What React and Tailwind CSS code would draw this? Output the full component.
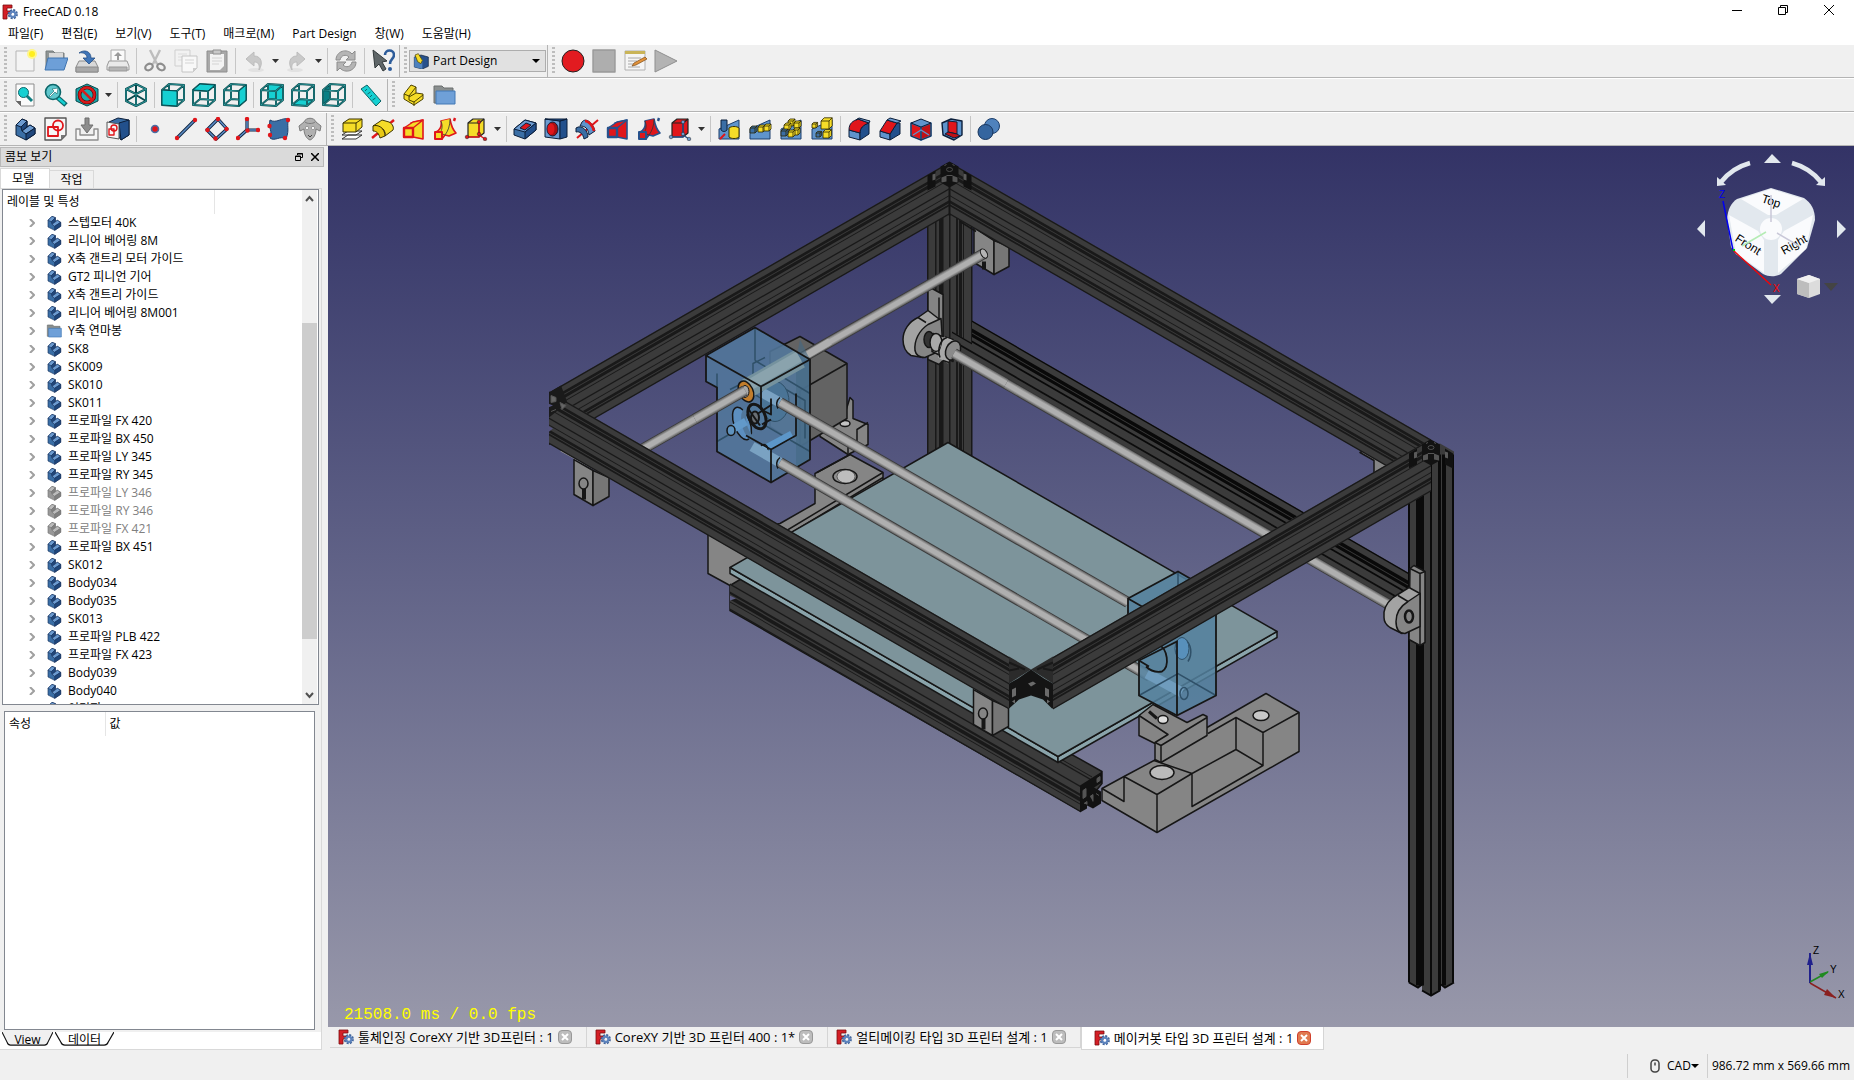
import { useState } from 'react';

const MENUS = ['파일(F)', '편집(E)', '보기(V)', '도구(T)', '매크로(M)', 'Part Design', '창(W)', '도움말(H)'];

const TREE = [
  { name: '스텝모터 40K' },
  { name: '리니어 베어링 8M' },
  { name: 'X축 갠트리 모터 가이드' },
  { name: 'GT2 피니언 기어' },
  { name: 'X축 갠트리 가이드' },
  { name: '리니어 베어링 8M001' },
  { name: 'Y축 연마봉', kind: 'folder' },
  { name: 'SK8' },
  { name: 'SK009' },
  { name: 'SK010' },
  { name: 'SK011' },
  { name: '프로파일 FX 420' },
  { name: '프로파일 BX 450' },
  { name: '프로파일 LY 345' },
  { name: '프로파일 RY 345' },
  { name: '프로파일 LY 346', hidden: true },
  { name: '프로파일 RY 346', hidden: true },
  { name: '프로파일 FX 421', hidden: true },
  { name: '프로파일 BX 451' },
  { name: 'SK012' },
  { name: 'Body034' },
  { name: 'Body035' },
  { name: 'SK013' },
  { name: '프로파일 PLB 422' },
  { name: '프로파일 FX 423' },
  { name: 'Body039' },
  { name: 'Body040' },
  { name: '이미지' },
];

const DOCS = [
  '툴체인징 CoreXY 기반 3D프린터 : 1',
  'CoreXY 기반 3D 프린터 400 : 1*',
  '얼티메이킹 타입 3D 프린터 설계 : 1',
  '메이커봇 타입 3D 프린터 설계 : 1',
];

// ---------- icons, all on a 24 grid ----------

const BLUE = '#3a6ea5';
const NAVY = '#0b1e3a';
const TEAL = '#16d0d2';
const TEAL_DARK = '#06484c';
const YEL = '#f5dc28';
const RED = '#e0161b';

function Svg({ children, className = 'w-6 h-6' }) {
  return (
    <svg viewBox="0 0 24 24" className={className} aria-hidden="true" strokeLinejoin="round">
      {children}
    </svg>
  );
}

function Logo({ className = 'w-4 h-4' }) {
  return (
    <svg viewBox="0 0 16 16" className={className} aria-hidden="true">
      <path d="M1 1h9v3H5v3h4v3H5v5H1z" fill="#d41f26" stroke="#7a0c10" strokeWidth=".8" />
      <circle cx="10.8" cy="10.2" r="3.9" fill="none" stroke="#3f6299" strokeWidth="2.4" strokeDasharray="1.9 1.15" />
      <circle cx="10.8" cy="10.2" r="2.6" fill="none" stroke="#5c83bd" strokeWidth="2.2" />
    </svg>
  );
}

function BodyShape({ fill = BLUE, light = '#6c9bd0', dark = '#1f477c', line = NAVY }) {
  return (
    <g stroke={line} strokeWidth="1">
      <path d="M3 8l6-6 5 2v6l3-2 5 3v6l-9 6-10-5z" fill={fill} />
      <path d="M3 8l6-6 5 2-6 6z" fill={light} />
      <path d="M8 10l6-6v6l-5 4z" fill={dark} />
      <path d="M9 14l8-6 5 3-9 6z" fill={light} />
      <path d="M13 17l9-6v6l-9 6z" fill={dark} />
    </g>
  );
}

function FolderShape() {
  return (
    <g>
      <path d="M2 3h8l2 2h9v15H2z" fill="#8a8f8f" stroke="#6b6f6f" />
      <path d="M4 8h19v13H4z" fill="#6fa0d8" stroke="#4379b5" />
    </g>
  );
}

// cube drawn as a wire frame with one painted face
function ViewCube({ face }) {
  const faces = {
    front: '1,7 16,8 16,23 1,22',
    top: '1,7 8,1 23,2 16,8',
    right: '16,8 23,2 23,17 16,23',
    rear: '8,1 23,2 23,17 8,16',
    bottom: '1,22 8,16 23,17 16,23',
    left: '1,7 8,1 8,16 1,22',
  };
  const wire = 'M1 7l15 1v15L1 22zM8 1l15 1v15L8 16zM1 7l7-6M16 8l7-6M16 23l7-6M1 22l7-6';
  return (
    <Svg>
      <polygon points={faces[face]} fill={face === 'left' ? '#0b7f84' : TEAL} />
      <path d={wire} fill="none" stroke={TEAL_DARK} strokeWidth="2" />
      <path d={wire} fill="none" stroke="#3fb9bb" strokeWidth=".6" />
      {['front', 'top', 'right'].includes(face) && (
        <polygon points={faces[face]} fill={TEAL} stroke={TEAL_DARK} strokeWidth="1" />
      )}
    </Svg>
  );
}

function LoftShape({ fill, line }) {
  return (
    <g>
      <path d="M9 6l12-3v19l-10-2z" fill={fill} stroke={line} strokeWidth="1.6" />
      <path d="M2 11l9-6 10-2-10 8z" fill={fill} stroke={line} strokeWidth="1.4" />
      <path d="M2 11h9v9H2z" fill={fill} stroke={line} strokeWidth="2.4" />
    </g>
  );
}

function SweepShape({ fill, line }) {
  return (
    <g>
      <path d="M3 15c4-2 6-6 5-11l9-2c1 6 3 11 6 14l-7 3-4-1-3 4z" fill={fill} stroke={line} strokeWidth="1.6" />
      <path d="M8 4c2 5 1 9-1 12l5 2c3-4 5-9 5-16" fill={fill} stroke="#333" strokeWidth=".8" />
      <path d="M2 15h7v7H2z" fill={fill} stroke={line} strokeWidth="2" />
      <path d="M22 1l-1 3" stroke={line} strokeWidth="2.4" />
    </g>
  );
}

function PrimShape({ fill, line, dot }) {
  return (
    <g>
      <path d="M4 6l5-4h11v14l-5 4H4z" fill={fill} stroke="#222" strokeWidth="1.2" />
      <path d="M4 6h11l5-4M15 6v14" fill="none" stroke="#222" strokeWidth="1.2" />
      <path d="M15 6v14H4M15 18l6 4" stroke={line} fill="none" strokeWidth="1.4" />
      {[[15, 5], [3, 20], [15, 17], [21, 22]].map(([x, y]) => (
        <circle key={`${x}${y}`} cx={x} cy={y} r="1.8" fill={dot} stroke="#222" strokeWidth=".5" />
      ))}
    </g>
  );
}

function Hill() {
  return <path d="M2 12l20-9v19H2z" fill="#5f94cc" stroke="#1d3f6c" strokeWidth="1" />;
}
function MiniCube({ x, y, s = 5, fill = YEL }) {
  return (
    <g stroke="#2a2500" strokeWidth=".8">
      <path d={`M${x} ${y}l${s * 0.4} ${-s * 0.4}h${s}v${s}l${-s * 0.4} ${s * 0.4}h${-s}z`} fill={fill} />
      <path d={`M${x} ${y}h${s}v${s}M${x + s} ${y}l${s * 0.4} ${-s * 0.4}`} fill="none" />
    </g>
  );
}

const ICONS = {
  new: (
    <Svg>
      <path d="M3 2h18v20H3z" fill="#f4f4f4" stroke="#b5b5b5" />
      <circle cx="19" cy="5" r="5" fill="#fff68a" />
      <circle cx="19" cy="5" r="3" fill="#ffee1e" />
    </Svg>
  ),
  open: (
    <Svg>
      <path d="M2 2h7l2 2h9v15H2z" fill="#8f9494" stroke="#777c7c" />
      <path d="M5 4h14v6H5z" fill="#d8d8d8" />
      <path d="M4 9h20l-4 12H1z" fill="#6d9fd8" stroke="#3f74b0" />
    </Svg>
  ),
  save: (
    <Svg>
      <path d="M4 12h16l3 6v5H1v-5z" fill="#d9d9d9" stroke="#8b8b8b" />
      <path d="M1 18h22v5H1z" fill="#a9a9a9" stroke="#8b8b8b" />
      <path d="M4 4c5-4 12-2 12 5h4l-6 6-6-6h4c0-4-4-6-8-5z" fill="#3f75b8" stroke="#254f86" strokeWidth=".8" />
    </Svg>
  ),
  print: (
    <Svg>
      <path d="M5 1h14v13H5z" fill="#fafafa" stroke="#aaa" />
      <path d="M12 3l4 4h-3v4h-2V7H8z" fill="#9a9a9a" />
      <path d="M3 12h18l2 5v4H1v-4z" fill="#e9e9e9" stroke="#999" />
      <path d="M3 18h18v4H3z" fill="#b4b4b4" stroke="#999" />
    </Svg>
  ),
  cut: (
    <Svg>
      <path d="M7 1l7 14M17 1l-7 14" stroke="#bdbdbd" strokeWidth="2.4" />
      <ellipse cx="6" cy="18" rx="4" ry="3" fill="none" stroke="#8d8d8d" strokeWidth="2.2" transform="rotate(-30 6 18)" />
      <ellipse cx="18" cy="18" rx="4" ry="3" fill="none" stroke="#8d8d8d" strokeWidth="2.2" transform="rotate(30 18 18)" />
    </Svg>
  ),
  copy: (
    <Svg>
      <path d="M1 1h15v16H1z" fill="#f2f2f2" stroke="#cfcfcf" />
      <path d="M4 5h9M4 8h9M4 11h6" stroke="#dcdcdc" />
      <path d="M8 7h15v12l-4 4H8z" fill="#f8f8f8" stroke="#c4c4c4" />
      <path d="M11 11h9M11 14h9" stroke="#d4d4d4" />
      <path d="M23 19h-4v4z" fill="#cdcdcd" />
    </Svg>
  ),
  paste: (
    <Svg>
      <path d="M2 2h20v21H2z" fill="#a9a9a9" stroke="#8e8e8e" />
      <path d="M5 5h14v12l-4 4H5z" fill="#f3f3f3" />
      <path d="M8 1h8v4H8z" fill="#c9c9c9" stroke="#8e8e8e" />
      <path d="M7 9h10M7 12h10M7 15h7" stroke="#d3d3d3" />
    </Svg>
  ),
  undo: (
    <Svg>
      <ellipse cx="14" cy="21" rx="8" ry="2" fill="#e2e2e2" />
      <path d="M4 10l8-7v4c8 0 9 8 5 14 1-6-1-8-5-8v4z" fill="#c9c9c9" stroke="#bcbcbc" />
    </Svg>
  ),
  redo: (
    <Svg>
      <ellipse cx="10" cy="21" rx="8" ry="2" fill="#e2e2e2" />
      <path d="M20 10l-8-7v4c-8 0-9 8-5 14-1-6 1-8 5-8v4z" fill="#c9c9c9" stroke="#bcbcbc" />
    </Svg>
  ),
  refresh: (
    <Svg>
      <path d="M2 11c0-9 11-12 16-6l3-3v9h-9l3-3c-3-3-8-2-9 3z" fill="#b5b5b5" stroke="#8c8c8c" />
      <path d="M22 13c0 9-11 12-16 6l-3 3v-9h9l-3 3c3 3 8 2 9-3z" fill="#b5b5b5" stroke="#8c8c8c" />
    </Svg>
  ),
  whats: (
    <Svg>
      <path d="M2 1l14 11-5 1 4 7-3 2-4-7-4 4z" fill="#5f6668" stroke="#333a3c" />
      <path d="M14 6c0-6 9-6 9 0 0 4-4 4-4 9" fill="none" stroke="#2d5c9a" strokeWidth="2.6" />
      <circle cx="19" cy="20" r="2" fill="#2d5c9a" />
    </Svg>
  ),
  record: <Svg><circle cx="12" cy="12" r="11" fill="#e21b20" stroke="#222" strokeWidth="1" /></Svg>,
  stop: <Svg><rect x="1" y="1" width="22" height="22" fill="#aeaeae" stroke="#999" strokeWidth="1.4" /></Svg>,
  macro: (
    <Svg>
      <path d="M2 2h20v19H2z" fill="#f5f5f5" stroke="#b0b0b0" />
      <path d="M2 2h20v3H2z" fill="#c9b458" />
      <path d="M5 9h13M5 12h9M5 15h9M5 18h12" stroke="#a8a8a8" />
      <path d="M22 8l2 2-11 6-4 1 2-3z" fill="#e2923a" stroke="#7d4a16" strokeWidth=".7" />
    </Svg>
  ),
  play: <Svg><path d="M1 1l22 11L1 23z" fill="#b3b3b3" stroke="#8f8f8f" /></Svg>,
  fit: (
    <Svg>
      <path d="M3 1h18v22H8l-5-5z" fill="#fafafa" stroke="#8d8d8d" />
      <path d="M3 18h5v5z" fill="#666" />
      <path d="M14 13l5 5" stroke="#0c7d80" strokeWidth="3" />
      <circle cx="10.5" cy="9.5" r="5" fill={TEAL} stroke="#0c6669" />
    </Svg>
  ),
  zoomsel: (
    <Svg>
      <path d="M13 14l9 8" stroke="#0c6669" strokeWidth="5" />
      <path d="M14 15l7 6" stroke={TEAL} strokeWidth="2.6" />
      <circle cx="9" cy="9" r="7.5" fill="#5fc7cd" stroke="#0c6669" strokeWidth="1.6" />
      <path d="M5 13l5-5-2-2 6-1-1 6-2-2-5 5z" fill="#fff" stroke="#0c6669" strokeWidth=".6" />
    </Svg>
  ),
  drawstyle: (
    <Svg>
      <path d="M1 6l11-5 11 5v12l-11 5-11-5z" fill="#1aa8ab" stroke={TEAL_DARK} />
      <circle cx="12" cy="12" r="7.5" fill="none" stroke="#5a0000" strokeWidth="3.6" />
      <circle cx="12" cy="12" r="7.5" fill="none" stroke="#d81a1a" strokeWidth="2.4" />
      <path d="M6.8 6.800l10.400 10.400" stroke="#d81a1a" strokeWidth="2.600" />
    </Svg>
  ),
  iso: (
    <Svg>
      <path d="M12 1l10 5v12l-10 5-10-5V6zM2 6l10 5 10-5M12 11v12M12 1v11M2 18l10-6 10 6" fill="none" stroke={TEAL_DARK} strokeWidth="2" />
      <path d="M12 1l10 5v12l-10 5-10-5V6zM2 6l10 5 10-5M12 11v12" fill="none" stroke="#3fb9bb" strokeWidth=".7" />
    </Svg>
  ),
  front: <ViewCube face="front" />,
  top: <ViewCube face="top" />,
  right: <ViewCube face="right" />,
  rear: <ViewCube face="rear" />,
  bottom: <ViewCube face="bottom" />,
  left: <ViewCube face="left" />,
  measure: (
    <Svg>
      <path d="M2 6l6-4 14 16-5 5z" fill={TEAL} stroke="#0c6669" />
      <path d="M6 8l2-2M8.5 11l3-2M11 14l2-2M13.5 17l3-2" stroke="#0c6669" />
    </Svg>
  ),
  part: (
    <Svg>
      <g stroke="#4c4200" strokeWidth="1">
        <path d="M3 11l7-9 5 2v6l7 1v5l-9 6-10-6z" fill={YEL} />
        <path d="M3 11l5 2 7-9M8 13v4l5 2 9-7M13 19v4M8 14l7-4" fill="none" />
      </g>
    </Svg>
  ),
  group: <Svg><FolderShape /></Svg>,
  body: <Svg><BodyShape /></Svg>,
  sketch: (
    <Svg>
      <path d="M1 1h21v17l-5 5H1z" fill="#f6f6f6" stroke="#555" strokeWidth="1.4" />
      <path d="M22 18h-5v5z" fill="#777" />
      <path d="M4 10h10v9H4z" fill="none" stroke={RED} strokeWidth="1.8" />
      <circle cx="14" cy="8.5" r="5" fill="none" stroke={RED} strokeWidth="1.8" />
    </Svg>
  ),
  map: (
    <Svg>
      <path d="M1 12h4v6h14v-6h4v11H1z" fill="#f6f6f6" stroke="#8d8d8d" strokeWidth="1.4" />
      <path d="M10 1h4v7h4l-6 8-6-8h4z" fill="#8d8d8d" stroke="#6e6e6e" />
    </Svg>
  ),
  edit: (
    <Svg>
      <path d="M3 5l9-4 11 2v15l-8 5z" fill={BLUE} stroke={NAVY} />
      <path d="M13 6l10-3v15l-8 5z" fill="#22508c" stroke={NAVY} />
      <path d="M1 5l12 2v15L1 20z" fill="#f6f6f6" stroke="#555" />
      <path d="M3 12h5v6H3z" fill="none" stroke={RED} strokeWidth="1.4" />
      <circle cx="8" cy="11" r="3" fill="none" stroke={RED} strokeWidth="1.4" />
    </Svg>
  ),
  point: <Svg><circle cx="12" cy="12" r="3.5" fill={RED} stroke="#4a6ea5" strokeWidth="1.6" /></Svg>,
  line: (
    <Svg>
      <path d="M3 21L21 3" stroke={NAVY} strokeWidth="3.2" />
      <path d="M3 21L21 3" stroke="#5c8dc6" strokeWidth="1.6" />
      <circle cx="3" cy="21" r="2.2" fill={RED} />
      <circle cx="21" cy="3" r="2.2" fill={RED} />
    </Svg>
  ),
  plane: (
    <Svg>
      <path d="M13 2l9 10-11 10-9-9z" fill="none" stroke={NAVY} strokeWidth="3.2" />
      <path d="M13 2l9 10-11 10-9-9z" fill="none" stroke="#5c8dc6" strokeWidth="1.6" />
      {[[13, 2], [21.5, 12], [10.5, 21.5], [2.5, 13]].map(([x, y]) => <circle key={x} cx={x} cy={y} r="2.2" fill={RED} />)}
    </Svg>
  ),
  cs: (
    <Svg>
      <path d="M11 2v11h11M11 13l-9 8" fill="none" stroke={NAVY} strokeWidth="3.2" />
      <path d="M11 2v11h11M11 13l-9 8" fill="none" stroke="#5c8dc6" strokeWidth="1.6" />
      {[[11, 2], [22, 13], [11.5, 13.5], [2, 21]].map(([x, y]) => <circle key={x} cx={x} cy={y} r="2.2" fill={RED} />)}
    </Svg>
  ),
  binder: (
    <Svg>
      <path d="M3 3c6 4 12-3 19-1-3 6 1 10-3 20-6-4-11 3-16-1 3-7-2-10 0-18z" fill={BLUE} stroke="#1d3f6c" />
      {[[21, 3], [2.5, 9], [3, 18], [18, 21]].map(([x, y]) => <circle key={x} cx={x} cy={y} r="2.2" fill={RED} />)}
    </Svg>
  ),
  clone: (
    <Svg>
      <path d="M6 5c2-5 10-5 12 0l5 4-1 5-4-2c0 6-3 10-6 11-3-1-6-5-6-11l-4 2-1-5z" fill="#b0b0b0" stroke="#7c7c7c" />
      <path d="M7 5c2 2 8 2 10 0" stroke="#7c7c7c" fill="none" />
      <circle cx="9" cy="11" r="1.6" fill="#fff" stroke="#777" strokeWidth=".6" />
      <circle cx="15" cy="11" r="1.6" fill="#fff" stroke="#777" strokeWidth=".6" />
      <path d="M10 18l2 2 2-2" stroke="#444" fill="none" />
    </Svg>
  ),
  pad: (
    <Svg>
      <path d="M2 18l6-4h14l-6 4zM2 22l6-4h14l-6 4z" fill="#fff" stroke="#333" />
      <path d="M3 6l6-4h13v8l-6 5H3z" fill={YEL} stroke="#3b3300" />
      <path d="M3 6h13l6-4M16 6v9" fill="none" stroke="#3b3300" />
    </Svg>
  ),
  rev: (
    <Svg>
      <path d="M1 21L23 3" stroke={RED} strokeWidth="2.4" />
      <path d="M2 9l9-6 7 2c4 2 5 6 4 8l-8 6c1-4-2-9-6-8z" fill={YEL} stroke="#3b3300" />
      <path d="M2 9c5-2 12 2 12 10l-5 2c-1-4-3-7-7-7z" fill="#e8c814" stroke="#3b3300" />
    </Svg>
  ),
  loft: <Svg><LoftShape fill={YEL} line={RED} /></Svg>,
  sweep: <Svg><SweepShape fill={YEL} line={RED} /></Svg>,
  prim: <Svg><PrimShape fill={YEL} line={RED} dot={RED} /></Svg>,
  pocket: (
    <Svg>
      <path d="M1 12l11-9 11 3v7l-11 9-11-4z" fill={BLUE} stroke={NAVY} />
      <path d="M1 12l11-9 11 3-11 9z" fill="#6c9bd0" stroke={NAVY} />
      <path d="M12 15v7l11-9V6z" fill="#22508c" stroke={NAVY} />
      <path d="M7 11l6-5 5 2-6 5z" fill={RED} stroke={NAVY} />
    </Svg>
  ),
  hole: (
    <Svg>
      <path d="M1 2l15 2v18L1 20z" fill="#6c9bd0" stroke={NAVY} />
      <path d="M16 4l7-2v18l-7 2zM1 2h22l-7 2z" fill="#22508c" stroke={NAVY} />
      <ellipse cx="8.5" cy="12" rx="5.5" ry="7" fill="#a80f13" stroke={NAVY} />
      <ellipse cx="7" cy="12" rx="3.5" ry="5.5" fill={RED} />
    </Svg>
  ),
  groove: (
    <Svg>
      <path d="M2 21L23 3" stroke={RED} strokeWidth="2" />
      <path d="M7 5c4-5 11 1 13 9l-6 4C13 11 10 9 5 9z" fill="#5f94cc" stroke={NAVY} />
      <path d="M10 4c4 0 8 5 9 10" stroke={RED} strokeWidth="2.6" fill="none" />
      <path d="M1 11c6-4 12 3 12 9l-4 2c-1-5-4-8-8-7z" fill={BLUE} stroke={NAVY} />
    </Svg>
  ),
  subloft: <Svg><LoftShape fill={RED} line="#27518c" /></Svg>,
  subpipe: <Svg><SweepShape fill={RED} line="#27518c" /></Svg>,
  subprim: <Svg><PrimShape fill={RED} line="#27518c" dot="#6c9bd0" /></Svg>,
  mirror: (
    <Svg>
      <Hill />
      <path d="M4 3h6v10c-2 2-4 2-6 0z" fill={BLUE} stroke={NAVY} />
      <path d="M12 11c2-2 8-2 10 0v9c-2 2-8 2-10 0z" fill={YEL} stroke="#3b3300" />
      <path d="M3 22l5-5" stroke={RED} strokeWidth="2" />
    </Svg>
  ),
  linear: <Svg><Hill /><MiniCube x={2} y={11} fill={BLUE} /><MiniCube x={10} y={10} /><MiniCube x={16} y={9} /></Svg>,
  polar: (
    <Svg>
      <Hill />
      <MiniCube x={9} y={4} /><MiniCube x={15} y={6} /><MiniCube x={5} y={8} />
      <MiniCube x={14} y={13} /><MiniCube x={9} y={15} /><MiniCube x={2} y={14} fill={BLUE} />
    </Svg>
  ),
  multi: <Svg><Hill /><MiniCube x={11} y={4} s={8} /><MiniCube x={2} y={7} s={4} /><MiniCube x={13} y={15} s={6} /><MiniCube x={6} y={16} s={4} fill={BLUE} /></Svg>,
  fillet: (
    <Svg>
      <path d="M2 13l11 3v7L2 20z" fill="#5f94cc" stroke={NAVY} />
      <path d="M13 16c0-5 3-8 9-10v11l-9 6z" fill="#22508c" stroke={NAVY} />
      <path d="M2 13C2 6 6 4 11 2l11 4c-6 2-9 5-9 10z" fill={RED} stroke={NAVY} />
      <path d="M9 3l3-2 11 3-1 2-11-4z" fill="#6c9bd0" stroke={NAVY} />
    </Svg>
  ),
  chamfer: (
    <Svg>
      <path d="M2 14l10 3v6L2 20z" fill="#5f94cc" stroke={NAVY} />
      <path d="M12 17l7-11h3v11l-10 6z" fill="#22508c" stroke={NAVY} />
      <path d="M2 14L9 3l10 3-7 11z" fill={RED} stroke={NAVY} />
      <path d="M9 3l3-2 11 3-4 2z" fill="#6c9bd0" stroke={NAVY} />
    </Svg>
  ),
  draft: (
    <Svg>
      <path d="M2 6l10 4v13L2 19z" fill={RED} stroke="#3a6ea5" strokeWidth="1.6" />
      <path d="M22 6l-10 4v13l10-4z" fill="#c01015" stroke="#3a6ea5" strokeWidth="1.6" />
      <path d="M2 6l10-4 10 4-10 4z" fill="#5f94cc" stroke={NAVY} />
      <path d="M2 6v13l10 4 10-4V6M12 10v13" fill="none" stroke={NAVY} strokeWidth=".8" />
      <path d="M4 18l8-5 8 5" stroke="#5f94cc" strokeWidth="1.4" fill="none" />
    </Svg>
  ),
  thick: (
    <Svg>
      <path d="M2 6l9-4 11 2v14l-8 5-11-5z" fill="#5f94cc" stroke={NAVY} strokeWidth="1.4" />
      <path d="M8 4l9 1v12l-9-2z" fill={RED} stroke={NAVY} />
      <path d="M8 15l9 2 3 2-6 2-9-4z" fill="#c01015" stroke={NAVY} />
    </Svg>
  ),
  boolean: (
    <Svg>
      <circle cx="15" cy="9" r="7.5" fill="#4f82bd" stroke="#1d3f6c" />
      <circle cx="8.5" cy="15" r="7.5" fill="#34659f" stroke="#16345c" />
    </Svg>
  ),
  workbench: (
    <Svg className="w-4 h-4">
      <path d="M2 6l10-3 11 3v14l-9 4-12-3z" fill="#27518c" stroke={NAVY} />
      <path d="M2 6l12 3v15L2 21z" fill="#4f82bd" />
      <path d="M3 3l5-2 6 10-2 5-5-3z" fill={YEL} stroke="#3b3300" />
    </Svg>
  ),
};

// '|' is a divider, 'v' a drop-down arrow
const ROW1 = [
  ['new:새로 만들기', 'open:열기', 'save:저장', 'print:인쇄', '|', 'cut:잘라내기', 'copy:복사', 'paste:붙여넣기', '|', 'undo:실행 취소', 'v', 'redo:다시 실행', 'v', '|', 'refresh:새로 고침', '|', 'whats:도움말'],
  ['record:매크로 기록', 'stop:기록 중지', 'macro:매크로', 'play:매크로 실행'],
];
const ROW2 = [
  ['fit:전체 보기', 'zoomsel:선택 보기', 'drawstyle:그리기 스타일', 'v', '|', 'iso:등각', '|', 'front:정면', 'top:윗면', 'right:우측', '|', 'rear:뒷면', 'bottom:아랫면', 'left:좌측', '|', 'measure:거리 측정'],
  ['part:파트', 'group:그룹'],
];
const ROW3 = [
  ['body:바디', 'sketch:스케치', 'map:스케치 매핑', 'edit:스케치 편집', '|', 'point:점', 'line:선', 'plane:평면', 'cs:좌표계', 'binder:바인더', 'clone:복제'],
  ['pad:패드', 'rev:회전', 'loft:로프트', 'sweep:스윕', 'prim:프리미티브', 'v', '|', 'pocket:포켓', 'hole:구멍', 'groove:홈', 'subloft:로프트 빼기', 'subpipe:스윕 빼기', 'subprim:프리미티브 빼기', 'v', '|', 'mirror:대칭', 'linear:선형 패턴', 'polar:원형 패턴', 'multi:다중 변환', '|', 'fillet:모깎기', 'chamfer:모따기', 'draft:구배', 'thick:두께', '|', 'boolean:불리언'],
];

function Grip() {
  return <div className="w-[3px] h-7 ml-1 mr-0.5 bg-[repeating-linear-gradient(180deg,#bdbdbd_0_2px,transparent_2px_4px)]" />;
}

function Tools({ items, last }) {
  return (
    <div className={`flex items-center h-full pr-px ${last ? '' : 'border-r border-[#b4b4b4]'}`}>
      <Grip />
      {items.map((it, i) => {
        if (it === '|') return <div key={i} className="w-1.5 flex justify-center"><div className="w-px h-[26px] bg-[#c6c6c6]" /></div>;
        if (it === 'v') return (
          <button key={i} aria-label="더 보기" className="w-3 flex justify-center">
            <svg viewBox="0 0 7 4" className="w-[7px] h-1"><path d="M0 0h7L3.5 4z" fill="#333" /></svg>
          </button>
        );
        const [id, label] = it.split(':');
        return (
          <button key={i} aria-label={label} className="w-[31px] h-[30px] flex items-center justify-center">
            {ICONS[id]}
          </button>
        );
      })}
    </div>
  );
}

function ToolRow({ children }) {
  return <div className="h-[34px] flex items-center bg-[#f0f0f0] border-t border-t-white border-b border-b-[#b4b4b4]">{children}</div>;
}

// ---------- 3D scene ----------

// aluminium profile seen from the side: a slanted strip with grooves running along it
const GROOVES = [[0, 1.5], [7, 3], [11, 3.5], [17, 1], [26, 1.5], [33, 1], [38, 3], [42, 2], [51, 1.5]];

function Beam({ x1, y1, x2, y2, h = 52, bands = GROOVES, fill = '#3b3b3b', dark = '#191919' }) {
  const strip = (o, w) => `${x1},${y1 + o} ${x2},${y2 + o} ${x2},${y2 + o + w} ${x1},${y1 + o + w}`;
  return (
    <g>
      <polygon points={strip(0, h)} fill={fill} />
      {bands.map(([o, w]) => <polygon key={o} points={strip(o, w)} fill={dark} />)}
    </g>
  );
}

function Rod({ x1, y1, x2, y2, w = 10 }) {
  const p = { x1, y1, x2, y2 };
  return (
    <g>
      <line {...p} stroke="#3c3c3c" strokeWidth={w + 1} />
      <line {...p} stroke="#757575" strokeWidth={w - 1} />
      <line {...p} stroke="#959595" strokeWidth={w - 3} />
      <line {...p} stroke="#afafaf" strokeWidth={w - 5} />
    </g>
  );
}

function Cap({ x, y }) {
  return (
    <g transform={`translate(${x} ${y})`}>
      <path d="M-22 14l8-5v16l-8 4zM22 14l-8-5v16l8 4z" fill="#111" />
      <path d="M-17 13l3-1v6l-3 1zM17 13l-3-1v6l3 1z" fill="#5a5a5a" />
      <path d="M0 0l9 5v16l-9 5-9-5V5z" fill="#121212" />
      <path d="M-8 16l5-2v6l-5 1zM8 16l-5-2v6l5 1z" fill="#555" />
      <ellipse cx="0" cy="8" rx="3" ry="2" fill="none" stroke="#4c4c4c" />
      <path d="M-5 4l2-1M5 4l-2-1M-3 14h6" stroke="#555" />
    </g>
  );
}

// shaft support hanging under a profile
function Support({ x, y }) {
  return (
    <g transform={`translate(${x} ${y})`} stroke="#161616" strokeWidth="1.5" strokeLinejoin="round">
      <path d="M0 0v35l19 11V11z" fill="#858585" />
      <path d="M19 11v35l16-9V18z" fill="#767676" />
      <path d="M-13-9L35 17" stroke="#999" strokeWidth="2" />
      <path d="M10 29v11" strokeWidth="4" />
      <ellipse cx="9.5" cy="24" rx="4.5" ry="5.5" fill="#858585" />
    </g>
  );
}

function Scene() {
  const ink = '#161616';
  return (
    <svg viewBox="328 146 1526 882" preserveAspectRatio="xMidYMid slice" className="absolute inset-0 w-full h-full" aria-hidden="true">
      {/* back post */}
      <rect x="927.5" y="200" width="44.5" height="260" fill="#3b3b3b" />
      {[[927, 1.5], [935, 1.5], [939, 4.5], [949, 1.5], [956, 2], [959, 3], [963, 1], [971, 1.5]].map(([x, w]) => (
        <rect key={x} x={x} y="200" width={w} height="260" fill="#191919" />
      ))}

      {/* rear rail and its rod */}
      <Beam x1={952} y1={332} x2={1408} y2={595} h={24} bands={[[0, 1.5], [8, 2], [15, 2], [22, 2]]} dark="#0d0d0d" />
      <Beam x1={972} y1={321} x2={1408} y2={573} h={26} bands={[[0, 1.5], [8, 4], [13, 3.5], [20, 2]]} dark="#090909" />
      <Rod x1={950} y1={352} x2={1394} y2={608} />

      {/* left Z bracket */}
      <g stroke={ink} strokeWidth="1.5" strokeLinejoin="round">
        <path d="M928 291l4-2 11 6v66l-4 4-11-5z" fill="#858585" />
        <path d="M939 298v28" />
        <path d="M928 311l-10 7c-9 4-15 13-15 22 0 8 3 13 8 16l12 2 12-20 6-17z" fill="#a3a3a3" />
        <path d="M941 319l-13 6c-9 6-14 16-13 26 1 5 5 7 10 7l18-8z" fill="#858585" />
        <path d="M918 318l8 5" />
        <ellipse cx="929" cy="340" rx="5" ry="8" fill="#333" />
        <path d="M933 334l20 6v22l-21-10z" fill="#9d9d9d" />
        <ellipse cx="936" cy="343" rx="6" ry="9" fill="#a9a9a9" />
        <path d="M944 337l12 5-8 22-10-6z" fill="#a9a9a9" stroke="none" />
        <path d="M947 338c-7 2-10 12-7 20M943 361l6 2" fill="none" />
        <ellipse cx="953" cy="351" rx="7" ry="10" fill="#8a8a8a" transform="rotate(25 953 351)" />
      </g>
      <Rod x1={954} y1={354} x2={1006} y2={384} />

      {/* rear top supports */}
      <g stroke={ink} strokeWidth="1.5" strokeLinejoin="round">
        <path d="M974 228v35l20 12v-34z" fill="#858585" />
        <path d="M994 241v34l15-8v-20z" fill="#767676" />
        <path d="M960 222l16 10M1360 453l14 8v14l18-10-24-16z" fill="#858585" />
        <path d="M984 262v8" strokeWidth="4" />
      </g>

      {/* left carriage foot and bed support */}
      <g stroke={ink} strokeWidth="1.5" strokeLinejoin="round">
        <path d="M850 455l33 18v12L745 570v20l-15-4-22-12v-44l72-6 35-20v-30z" fill="#858585" />
        <path d="M883 473L770 541M883 478L772 545M817 473l33-18" fill="none" />
        <ellipse cx="845" cy="477" rx="12" ry="7" fill="#909090" />
        <ellipse cx="846" cy="477" rx="9" ry="6.5" fill="#bdbdbd" strokeWidth=".5" />
        <path d="M850 398l3 3v18l15 6v20l-20 10-28-18v-16l26-10z" fill="#858585" />
        <path d="M868 423l-11 7v18M848 454v-16l-18-11" fill="none" />
        <ellipse cx="845" cy="424" rx="5" ry="3" fill="#c4c4c4" />
      </g>

      {/* lower profile */}
      <path d="M730 586l20-12 352 198v12l-22 27-350-200z" fill="#3b3b3b" stroke={ink} strokeWidth="1.5" />
      <Beam x1={730} y1={584} x2={1080} y2={786} h={26} bands={[[0, 1.5], [8, 2.5], [12, 4], [18, 1], [25, 1.5]]} />
      <Beam x1={745} y1={577} x2={1092} y2={777} h={5} bands={[[0, 1], [3, 1.5]]} />
      <path d="M730 596l6 3-6 2z" fill="#5d5d84" />
      <path d="M1080 786l22-14v11l-8 5 7 4v12l-8 5-6-3v3l-7 4z" fill="#121212" />
      <path d="M1083 791l3-2v8l-3 2zM1097 779l3-2v4l-3 2zM1090 797l3-2v7M1096 794l3 2M1084 804l3-2v3" fill="#555" stroke="#555" />

      {/* print bed */}
      <g stroke={ink} strokeWidth="1.5" strokeLinejoin="round">
        <path d="M730 568v6l328 189v-6z" fill="#8aa4ab" />
        <path d="M1058 757v6l219-125v-6z" fill="#8aa4ab" />
        <path d="M948 443l329 189-219 125-328-189z" fill="#7d949b" />
      </g>

      {/* right Z block */}
      <g stroke={ink} strokeWidth="1.5" strokeLinejoin="round">
        <path d="M1102 789l22-12 30-16 53-33 59-34 33 19v39l-142 81-55-32z" fill="#858585" />
        <path d="M1124 777l33 18v38M1157 795l35-21M1192 774v33l71-41v-33l36-20M1263 733l-27-15v32l27 16M1236 750l-44 24M1236 718l-28 16M1124 777v25l-22-13M1154 761l38 13" fill="none" />
        <ellipse cx="1162" cy="773" rx="12" ry="7" fill="#bababa" />
        <ellipse cx="1261" cy="716" rx="8" ry="5" fill="#c8c8c8" />
        <path d="M1139 716v20l16 8v16l6 3 46-27v-19l-4-2-16 8-34-18z" fill="#858585" />
        <path d="M1139 716l29 19-13 8 6 3v17M1161 746l46-28" fill="none" />
        <ellipse cx="1163" cy="720" rx="5" ry="4" fill="#ddd" />
        <path d="M1149 712l8 7" strokeWidth="3" />
      </g>

      {/* motor */}
      <g stroke={ink} strokeWidth="1.5" strokeLinejoin="round">
        <path d="M800 337l47 27v55l-47 28-30-20v-75z" fill="#636363" />
        <path d="M800 391l47-27" />
        <path d="M800 391v56" />
      </g>

      {/* Y rod */}
      <Rod x1={640} y1={451} x2={984} y2={254} />
      <ellipse cx="984" cy="254" rx="3" ry="5" fill="#b4b4b4" stroke={ink} transform="rotate(-30 984 254)" />

      {/* left carriage, translucent */}
      <g strokeLinejoin="round">
        <path d="M755 328l55 32v100l-39 23-54-31v-64l-11-6v-26z" fill="#52789c" fillOpacity=".88" />
        <path d="M800 340l10 20v100l-14 8v-108z" fill="#456983" fillOpacity=".6" />
        <path d="M755 328v33M717 374v16M755 361l55 33M717 442l38-22 55 32M730 390l30-15 45 26v38M765 358l-12 6v30l24 14" fill="none" stroke="#2f5068" strokeWidth="1.5" />
        <ellipse cx="775" cy="402" rx="14" ry="20" fill="#4a7496" stroke="#2f5068" />
        <ellipse cx="742" cy="424" rx="8" ry="17" fill="#5c8fc0" stroke={ink} strokeWidth="1.5" transform="rotate(-20 742 424)" />
        <path d="M747 409c-6 6-4 22 6 31" fill="none" stroke="#52789c" strokeWidth="5" />
        <line x1="730" y1="431" x2="746" y2="422" stroke="#6299c9" strokeWidth="8" />
        <line x1="764" y1="450" x2="792" y2="435" stroke="#5c96c8" strokeWidth="8" />
        <ellipse cx="757" cy="417" rx="8" ry="13" fill="#52789c" stroke={ink} strokeWidth="3" transform="rotate(-25 757 417)" />
        <ellipse cx="755" cy="418" rx="4" ry="6" fill="#6a6f74" stroke={ink} strokeWidth="2" />
        <path d="M748 409l12 17M758 414l14-9M762 425l9-5" stroke={ink} strokeWidth="2" />
        <ellipse cx="731" cy="431" rx="4" ry="5" fill="#5f92bd" stroke={ink} strokeWidth="1.5" />
        <ellipse cx="764" cy="451" rx="4" ry="6" fill="#80b2dc" stroke={ink} strokeWidth="1.5" />
        <line x1="762" y1="393" x2="780" y2="403" stroke="#7aa2c2" strokeWidth="10" />
        <line x1="752" y1="447" x2="780" y2="463" stroke="#7aa2c2" strokeWidth="10" />
        <line x1="747" y1="389" x2="800" y2="359" stroke="#75929e" strokeWidth="20" />
        <line x1="747" y1="387" x2="799" y2="357" stroke="#8aa3ad" strokeWidth="11" />
        <line x1="808" y1="355" x2="830" y2="342" stroke="#afafaf" strokeWidth="7" />
        <path d="M755 328l55 32-49 27-55-31z M706 356v26l11 6v64l54 31 39-23V360M761 387v23l10 5v-16M771 450v33M771 450l25-14v-42M771 450l-25-14" fill="none" stroke={ink} strokeWidth="1.8" />
        <ellipse cx="746" cy="392" rx="7" ry="11" fill="#c27d2c" stroke={ink} strokeWidth="1.5" transform="rotate(-25 746 392)" />
        <ellipse cx="745" cy="392" rx="4" ry="6" fill="#a8a8a8" stroke={ink} />
      </g>
      <Rod x1={695} y1={419.5} x2={745} y2={391} />

      {/* X rods */}
      <Rod x1={780} y1={403} x2={1128} y2={603} />
      <Rod x1={780} y1={463} x2={1150} y2={677} />
      <path d="M780 398c-4 3-4 8-2 11M780 458c-4 3-4 8-2 11" stroke={ink} strokeWidth="1.5" fill="none" />

      {/* right carriage, translucent */}
      <path d="M1178 572l38 22v102l-39 20-38-20v-35l-11-6v-56z" fill="#53819f" fillOpacity=".85" />
      <line x1="1147" y1="674" x2="1182" y2="693" stroke="#6f9cbd" strokeWidth="10" />
      <path d="M1178 572v30M1139 696l39-22 38 22M1185 640c6 4 8 14 3 22M1160 645l28-15" fill="none" stroke="#2f5068" strokeWidth="1.5" />
      <ellipse cx="1182" cy="649" rx="7" ry="11" fill="#5890bb" stroke="#2f5068" />
      <ellipse cx="1184" cy="694" rx="4" ry="6" fill="none" stroke="#2f5068" strokeWidth="1.5" />
      <path d="M1128 655v-56l50-27 38 22v102l-39 20-38-20v-35l38-19v74M1128 599l14 8M1158 645c10 4 12 22 4 27-6 1-12-1-16-5M1139 661l10 6" fill="none" stroke={ink} strokeWidth="1.8" />

      {/* supports under the front profiles */}
      <Support x={574} y={460} />
      <Support x={973.5} y={690} />

      {/* top frame */}
      <Beam x1={549} y1={393} x2={949.5} y2={162.5} />
      <Beam x1={949.5} y1={162.5} x2={1431} y2={440} />
      <path d="M949.5 180v36" stroke={ink} strokeWidth="2" />

      {/* right post */}
      <path d="M1409 455v528l9 5 4-3v6l9 5 9-5v-6l5 3 9-5V452l-14-8z" fill="#3b3b3b" />
      {[[1408, 2, 983], [1416, 8, 986], [1430, 2, 996], [1438, 3, 991], [1442, 4, 986], [1452, 2, 983]].map(([x, w, b]) => (
        <rect key={x} x={x} y="455" width={w} height={b - 455} fill="#0a0a0a" />
      ))}
      <path d="M1409 983l9 5 4-3M1422 991l9 5 9-5M1441 985l4 3 9-5" fill="none" stroke="#0a0a0a" strokeWidth="2" />

      {/* right Z bracket */}
      <g stroke={ink} strokeWidth="1.5" strokeLinejoin="round">
        <path d="M1410 569l4-3 11 6v71l-5 3-11-6z" fill="#858585" />
        <path d="M1410 569l10 5 5-2M1420 574v72" fill="none" />
        <path d="M1409 588l-16 10c-7 6-10 13-9 20 0 5 3 8 6 10l12 6 18-30v-10z" fill="#a3a3a3" />
        <path d="M1420 594l-12 8c-8 5-12 12-12 20 0 8 3 12 9 12l15-7z" fill="#858585" />
        <path d="M1398 596l10 6" />
        <ellipse cx="1409" cy="617" rx="4" ry="6" fill="#858585" strokeWidth="2.5" />
      </g>

      <Beam x1={1053} y1={657.5} x2={1431} y2={439.5} />
      <Beam x1={549} y1={392} x2={1009} y2={657.5} />
      <path d="M1009 657l22 13-22 14zM1053 657l-22 13 22 14z" fill="#2b2b2b" />
      <path d="M1009 671l10-2M1053 671l-10-2M1009 663l16 7M1053 663l-16 7" stroke="#191919" strokeWidth="2" />
      <path d="M1009 684l9-5 13-9 13 9 9 5v25h-1l-9-9-12-4-12 4-10 9z" fill="#141414" />
      <path d="M1012 690l4-2v8l-4 2zM1049 690l-4-2v8l4 2zM1028 684l5-2 3 2-5 3zM1012 702l3-2v4zM1050 702l-3-2v4z" fill="#6a6a6a" />

      <Cap x={949.5} y={162} />
      <Cap x={1431} y={440} />
      <path d="M549 393l12-7 6 16-8 8-10 8z" fill="#1a1a1a" />
      <path d="M551 396l5 2v4l-5 1zM560 403l6 3-4 4zM551 412l5-2" fill="#666" stroke="#555" />
      <path d="M548 404l5 2-5 2zM548 426l5 3-5 4z" fill="#53537d" />
    </svg>
  );
}

function NavCube() {
  return (
    <svg viewBox="0 0 194 174" className="absolute top-0 right-0 w-[194px] h-[174px]" aria-hidden="true">
      <g fill="#e2e8ee">
        <path d="M112 8l9 9h-17zM104 149h17l-9 9zM37 83l8-9v17zM177 74l9 9-9 9z" />
        <path d="M57 31v9l9-1zM165 31v9l-9-1z" />
        <path d="M90 17q-18 5-29 19M132 17q18 5 29 19" fill="none" stroke="#e2e8ee" strokeWidth="4.5" />
        <path d="M111 42l33 10c7 5 11 11 11 22l-8 28-26 26c-6 3-12 3-18 0l-27-20-5-7-4-28c1-10 4-16 10-20z" />
      </g>
      <g fill="#fafbfd">
        <path d="M81 53l30-10 32 10-27 16h-8z" />
        <path d="M69 69l29 16 6 9v33l-28-20z" />
        <path d="M153 69l-29 16-6 9v33l28-24z" />
        <circle cx="111" cy="83" r="11" />
      </g>
      <g fontFamily="Liberation Sans, sans-serif" fontSize="12" fill="#000" textAnchor="middle">
        <text transform="translate(110 59) rotate(18)">Top</text>
        <text transform="translate(86 102) rotate(32)">Front</text>
        <text transform="translate(136 102) rotate(-30)">Right</text>
      </g>
      <path d="M111 49v27M117 87l22 13" stroke="#c9c8d8" strokeWidth="1.5" />
      <path d="M82 100l24-14" stroke="#b4ecb4" strokeWidth="1.5" />
      <path d="M63 55l10 49" stroke="#0000f0" strokeWidth="1.5" />
      <path d="M74 105l37 34" stroke="#f00" strokeWidth="1.2" />
      <rect x="73" y="103" width="2" height="2" fill="#0c0" />
      <g fontFamily="Liberation Sans, sans-serif" fontSize="10">
        <text x="59" y="52" fill="#0000f0">Z</text>
        <text x="113" y="146" fill="#f00">X</text>
      </g>
      <path d="M149 129l11 4v15l-11 4-12-4v-15z" fill="#dcdcdc" />
      <path d="M137 133l12 4v15l-12-4z" fill="#bdbdbd" />
      <path d="M149 129l11 4-11 4-12-4z" fill="#f0f0f0" />
      <path d="M164 137h14l-7 8z" fill="#444" />
    </svg>
  );
}

function AxisCross() {
  return (
    <svg viewBox="0 0 60 90" className="absolute right-0 bottom-0 w-[60px] h-[90px]" aria-hidden="true">
      <path d="M16 46V16" stroke="#20208c" strokeWidth="2" />
      <path d="M16 16l3 12h-6z" fill="#20208c" />
      <path d="M16 45l18-10" stroke="#208a20" strokeWidth="1.5" />
      <path d="M35 34l-7 7-3-4z" fill="#208a20" />
      <path d="M16 46l26 15" stroke="#8a2020" strokeWidth="1.5" />
      <path d="M42 61l-12-3 3-6z" fill="#8a2020" />
      <g fontFamily="Liberation Sans, sans-serif" fontSize="10" fill="#000">
        <text x="19" y="17">Z</text>
        <text x="36" y="36">Y</text>
        <text x="44" y="61">X</text>
      </g>
    </svg>
  );
}

// ---------- left dock ----------

function TreeRow({ item }) {
  return (
    <li className={`h-[18px] flex items-center shrink-0 ${item.hidden ? 'text-[#808080]' : ''}`}>
      <svg viewBox="0 0 6 8" className="w-1.5 h-2 ml-[26px] shrink-0" aria-hidden="true">
        <path d="M1 0l4 4-4 4" fill="none" stroke="#a0a0a0" strokeWidth="2" />
      </svg>
      <Svg className="w-4 h-4 ml-[11px] mr-1.5 shrink-0">
        {item.kind === 'folder' && <FolderShape />}
        {item.kind !== 'folder' && item.hidden && <BodyShape fill="#989898" light="#bcbcbc" dark="#808080" line="#777" />}
        {item.kind !== 'folder' && !item.hidden && <BodyShape line="#1c3760" />}
      </Svg>
      <span className="whitespace-nowrap">{item.name}</span>
    </li>
  );
}

function ComboView() {
  const [tab, setTab] = useState('모델');
  return (
    <aside className="w-[328px] shrink-0 flex flex-col pt-px pr-1 pb-[30px]">
      <div className="h-5 flex items-center pl-1 bg-[#dadada] border border-[#b9b9b9] whitespace-nowrap">
        <span className="grow">콤보 보기</span>
        <button aria-label="분리" className="w-4 flex justify-center">
          <svg viewBox="0 0 8 8" className="w-2 h-2"><path d="M2.5 2V.5h5v4H6M.5 3h5v4.5h-5zM0 3.5h6M2 1h6" fill="none" stroke="#000" /></svg>
        </button>
        <button aria-label="닫기" className="w-4 flex justify-center">
          <svg viewBox="0 0 8 8" className="w-2 h-2"><path d="M0 0l8 8M8 0L0 8" stroke="#000" strokeWidth="1.5" /></svg>
        </button>
      </div>
      <div className="flex items-end h-[21px] pt-px">
        {['모델', '작업'].map((t) => (
          <button
            key={t}
            onClick={() => setTab(t)}
            className={t === tab ? 'w-[50px] h-5 pr-1 bg-white border border-b-0 border-[#d9d9d9]' : 'w-11 h-[18px] border border-l-0 border-b-0 border-[#d9d9d9]'}
          >
            {t}
          </button>
        ))}
      </div>
      <div className="grow min-h-0 flex flex-col border border-l-0 border-[#d9d9d9] bg-[#f0f0f0] mr-0.5">
        <div className="h-[516px] shrink flex mx-0.5 bg-white border border-[#828790]">
          <div className="grow flex flex-col overflow-hidden">
            <div className="h-6 flex shrink-0">
              <div className="w-[212px] pl-1 flex items-center border-r border-[#e5e5e5]">레이블 및 특성</div>
            </div>
            <ul className="grow min-h-0 overflow-hidden flex flex-col">
              {TREE.map((item) => <TreeRow key={item.name} item={item} />)}
            </ul>
          </div>
          <div className="w-[15px] shrink-0 flex flex-col bg-[#f0f0f0] mr-px">
            <svg viewBox="0 0 15 17" className="h-[17px]"><path d="M4 11l3.5-4 3.5 4" fill="none" stroke="#505050" strokeWidth="2" /></svg>
            <div className="grow flex flex-col">
              <div className="grow-[116]" />
              <div className="grow-[316] bg-[#cdcdcd]" />
              <div className="grow-[48]" />
            </div>
            <svg viewBox="0 0 15 17" className="h-[17px]"><path d="M4 6l3.5 4L11 6" fill="none" stroke="#505050" strokeWidth="2" /></svg>
          </div>
        </div>
        <div className="grow min-h-0 mt-1.5 ml-1 mr-1.5 flex flex-col bg-white border border-[#828790]">
          <table className="w-full table-fixed text-left">
            <thead>
              <tr className="h-6">
                <th className="w-[100px] pl-1 font-normal border-r border-[#e5e5e5]">속성</th>
                <th className="pl-1 font-normal">값</th>
              </tr>
            </thead>
          </table>
        </div>
        <div className="h-[17px] shrink-0 flex bg-white mt-0.5">
          <BottomTab label="View" width="w-[51px]" fill="#f0f0f0" />
          <BottomTab label="데이터" width="w-[59px]" fill="#ffffff" />
        </div>
      </div>
    </aside>
  );
}

function BottomTab({ label, width, fill }) {
  return (
    <button className={`relative h-3.5 ml-0.5 leading-[13px] ${width}`}>
      <svg viewBox="0 0 60 15" preserveAspectRatio="none" className="absolute inset-0 w-full h-full">
        <path d="M0 0l6 11q1 3 4 3h40q3 0 4-3l6-11" fill={fill} stroke="#111" strokeWidth="1.2" />
      </svg>
      <span className="relative">{label}</span>
    </button>
  );
}

function DocTab({ name, active, onSelect }) {
  return (
    <div className={`flex items-center border border-t-0 border-[#d5d5d5] ${active ? 'h-[23px] pl-3 pr-3 bg-white' : 'h-[21px] pl-2 pr-3.5 border-l-0'}`}>
      <button onClick={onSelect} className="flex items-center gap-1 text-[13px] whitespace-nowrap">
        <Logo />
        {name}
      </button>
      <button aria-label="닫기" className={`w-3.5 h-3.5 ml-1 rounded-sm border flex items-center justify-center ${active ? 'bg-[#e07a50] border-[#d0402c]' : 'bg-[#bdbdbd] border-[#989898]'}`}>
        <svg viewBox="0 0 8 8" className="w-2 h-2"><path d="M1 1l6 6M7 1L1 7" stroke="#fff" strokeWidth="2" /></svg>
      </button>
    </div>
  );
}

export default function App() {
  const [doc, setDoc] = useState(3);
  return (
    <div className="h-screen flex flex-col overflow-hidden bg-[#f0f0f0] text-black text-[12px] leading-4 font-['Open_Sans','Noto_Sans_CJK_KR',sans-serif]">
      <header className="bg-white">
        <div className="h-6 flex items-center pl-0.5">
          <Logo />
          <h1 className="grow pl-[5px]">FreeCAD 0.18</h1>
          <div className="flex pr-0.5 pb-1">
            <button aria-label="최소화" className="w-[46px] flex justify-center"><svg viewBox="0 0 10 10" className="w-2.5 h-2.5"><path d="M0 5.5h10" stroke="#000" /></svg></button>
            <button aria-label="이전 크기로" className="w-[46px] flex justify-center"><svg viewBox="0 0 10 10" className="w-2.5 h-2.5"><path d="M.5 2.5h7v7h-7zM2.5 2.5v-2h7v7h-2" fill="none" stroke="#000" /></svg></button>
            <button aria-label="닫기" className="w-[46px] flex justify-center"><svg viewBox="0 0 10 10" className="w-2.5 h-2.5"><path d="M0 0l10 10M10 0L0 10" stroke="#000" /></svg></button>
          </div>
        </div>
        <nav className="h-5 flex items-center pl-2 gap-[18px]">
          {MENUS.map((m) => <button key={m} className="whitespace-nowrap">{m}</button>)}
        </nav>
      </header>

      <ToolRow>
        <Tools items={ROW1[0]} />
        <div className="flex items-center h-full pr-px border-r border-[#b4b4b4]">
          <Grip />
          <div className="relative flex items-center">
            <span className="absolute left-1">{ICONS.workbench}</span>
            <select aria-label="워크벤치" className="appearance-none w-[137px] h-[22px] pl-[23px] bg-[#e1e1e1] border border-[#adadad]">
              <option>Part Design</option>
            </select>
            <svg viewBox="0 0 8 4" className="absolute right-1.5 w-2 h-1 pointer-events-none"><path d="M0 0h8L4 4z" /></svg>
          </div>
        </div>
        <Tools items={ROW1[1]} last />
      </ToolRow>
      <ToolRow>
        <Tools items={ROW2[0]} />
        <Tools items={ROW2[1]} last />
      </ToolRow>
      <ToolRow>
        <Tools items={ROW3[0]} />
        <Tools items={ROW3[1]} last />
      </ToolRow>

      <div className="grow min-h-0 flex">
        <ComboView />
        <main className="grow min-w-0 flex flex-col">
          <div className="relative grow min-h-0 overflow-hidden bg-linear-to-b from-[#333366] to-[#9898aa]">
            <Scene />
            <NavCube />
            <AxisCross />
            <p className="absolute left-4 bottom-0 font-['Liberation_Mono',monospace] text-base text-[#ffff00]">21508.0 ms / 0.0 fps</p>
          </div>
          <div className="h-[23px] shrink-0 flex items-start pl-0.5">
            {DOCS.map((d, i) => <DocTab key={d} name={d} active={i === doc} onSelect={() => setDoc(i)} />)}
          </div>
          <footer className="h-[30px] shrink-0 flex items-center justify-end pt-0.5 whitespace-nowrap">
            <div className="h-6 flex items-center border-l border-[#cfcfcf] pl-[22px] pr-2">
              <svg viewBox="0 0 10 14" className="w-2.5 h-3.5"><rect x="1" y="1" width="8" height="12" rx="3.5" fill="none" stroke="#444" strokeWidth="1.5" /><path d="M5 3.5v3" stroke="#444" strokeWidth="1.5" /></svg>
              <button className="flex items-center pl-[7px]">
                CAD
                <svg viewBox="0 0 8 4" className="w-2 h-1"><path d="M0 0h8L4 4z" /></svg>
              </button>
            </div>
            <div className="h-6 flex items-center border-l border-[#cfcfcf] pl-1 pr-1">986.72 mm x 569.66 mm</div>
          </footer>
        </main>
      </div>
    </div>
  );
}
